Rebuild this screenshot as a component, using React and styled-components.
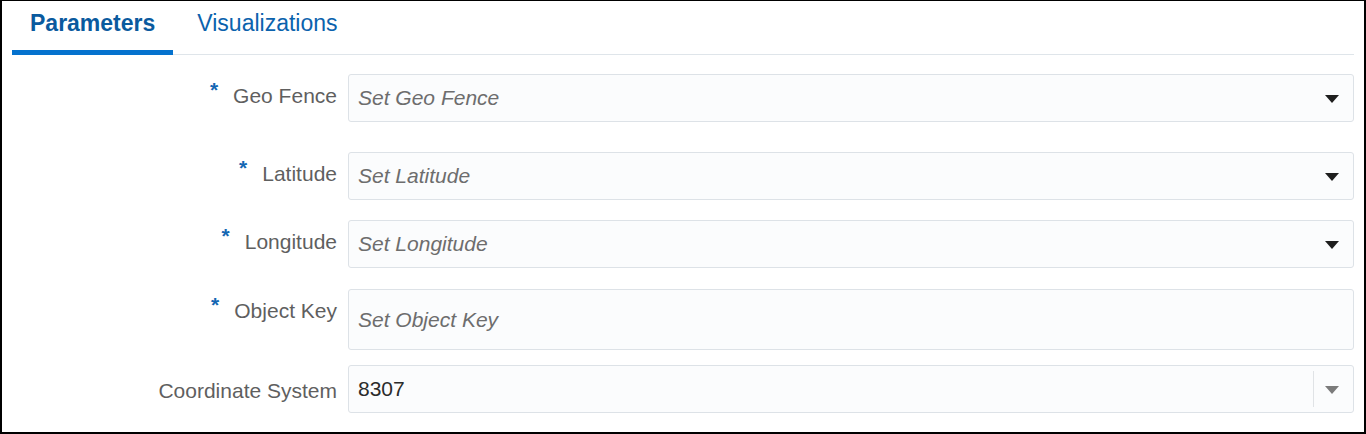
import React from 'react'
import styled, { createGlobalStyle } from 'styled-components'

const GlobalStyle = createGlobalStyle`
  html, body {
    margin: 0;
    padding: 0;
    background: #ffffff;
  }
  * {
    box-sizing: border-box;
  }
`

const fields = [
  { label: 'Geo Fence', placeholder: 'Set Geo Fence', required: true, select: true, top: 19 },
  { label: 'Latitude', placeholder: 'Set Latitude', required: true, select: true, top: 30 },
  { label: 'Longitude', placeholder: 'Set Longitude', required: true, select: true, top: 20 },
  { label: 'Object Key', placeholder: 'Set Object Key', required: true, tall: true, top: 21 },
  { label: 'Coordinate System', value: '8307', combo: true, top: 15, shift: 4 },
]

const App = () => {
  return (
    <>
      <GlobalStyle />
      <Frame>
        <TabBar>
          <Tab active>Parameters</Tab>
          <Tab>Visualizations</Tab>
        </TabBar>
        <Form>
          {fields.map(f => (
            <Row key={f.label} top={f.top}>
              <Label shift={f.shift || 0}>
                {f.required && <Required>*</Required>}
                {f.label}
              </Label>
              <Field tall={f.tall}>
                {f.value ? (
                  <Value>{f.value}</Value>
                ) : (
                  <Placeholder>{f.placeholder}</Placeholder>
                )}
                {f.select && <Arrow />}
                {f.combo && (
                  <ComboButton>
                    <Arrow muted />
                  </ComboButton>
                )}
              </Field>
            </Row>
          ))}
        </Form>
      </Frame>
    </>
  )
}

const Frame = styled.div`
  width: 1366px;
  height: 434px;
  border: 2px solid #000;
  border-top-width: 1px;
  padding: 0 10px 0 10px;
  font-family: 'Liberation Sans', Arial, sans-serif;
  display: flex;
  flex-direction: column;
`

const TabBar = styled.div`
  display: flex;
  height: 54px;
  border-bottom: 1px solid #dfe5ea;
`

const Tab = styled.div`
  display: flex;
  align-items: center;
  height: 54px;
  padding: 5px ${p => (p.active ? '18px' : '24px')} 10px;
  margin-bottom: -1px;
  font-size: 23px;
  font-weight: ${p => (p.active ? 700 : 400)};
  color: ${p => (p.active ? '#0a5a9e' : '#0b62ad')};
  border-bottom: 5px solid ${p => (p.active ? '#0572ce' : 'transparent')};
`

const Form = styled.div`
  display: flex;
  flex-direction: column;
`

const Row = styled.div`
  display: flex;
  align-items: flex-start;
  margin-top: ${p => p.top}px;
`

const Label = styled.div`
  width: 325px;
  flex-shrink: 0;
  text-align: right;
  font-size: 21px;
  line-height: 44px;
  color: #5f5f5f;
  padding-top: ${p => p.shift}px;
`

const Required = styled.span`
  color: #1467b3;
  font-size: 21px;
  font-weight: 700;
  position: relative;
  top: -6px;
  margin-right: 15px;
`

const Field = styled.div`
  margin-left: 11px;
  flex: 1;
  height: ${p => (p.tall ? '61px' : '48px')};
  background: #fbfcfd;
  border: 1px solid #dde2e7;
  border-radius: 3px;
  display: flex;
  align-items: center;
  padding-left: 9px;
  padding-right: 14px;
`

const Placeholder = styled.span`
  flex: 1;
  font-size: 21px;
  font-style: italic;
  color: #6d6d6d;
`

const Value = styled.span`
  flex: 1;
  font-size: 21px;
  color: #2b2b2b;
`

const Arrow = styled.span`
  width: 0;
  height: 0;
  border-left: 7px solid transparent;
  border-right: 7px solid transparent;
  border-top: 8px solid ${p => (p.muted ? '#7b7b7b' : '#1e1e1e')};
  margin-top: 2px;
`

const ComboButton = styled.div`
  display: flex;
  align-items: center;
  height: 36px;
  border-left: 1px solid #e0e3e6;
  padding-left: 11px;
`

export default App
